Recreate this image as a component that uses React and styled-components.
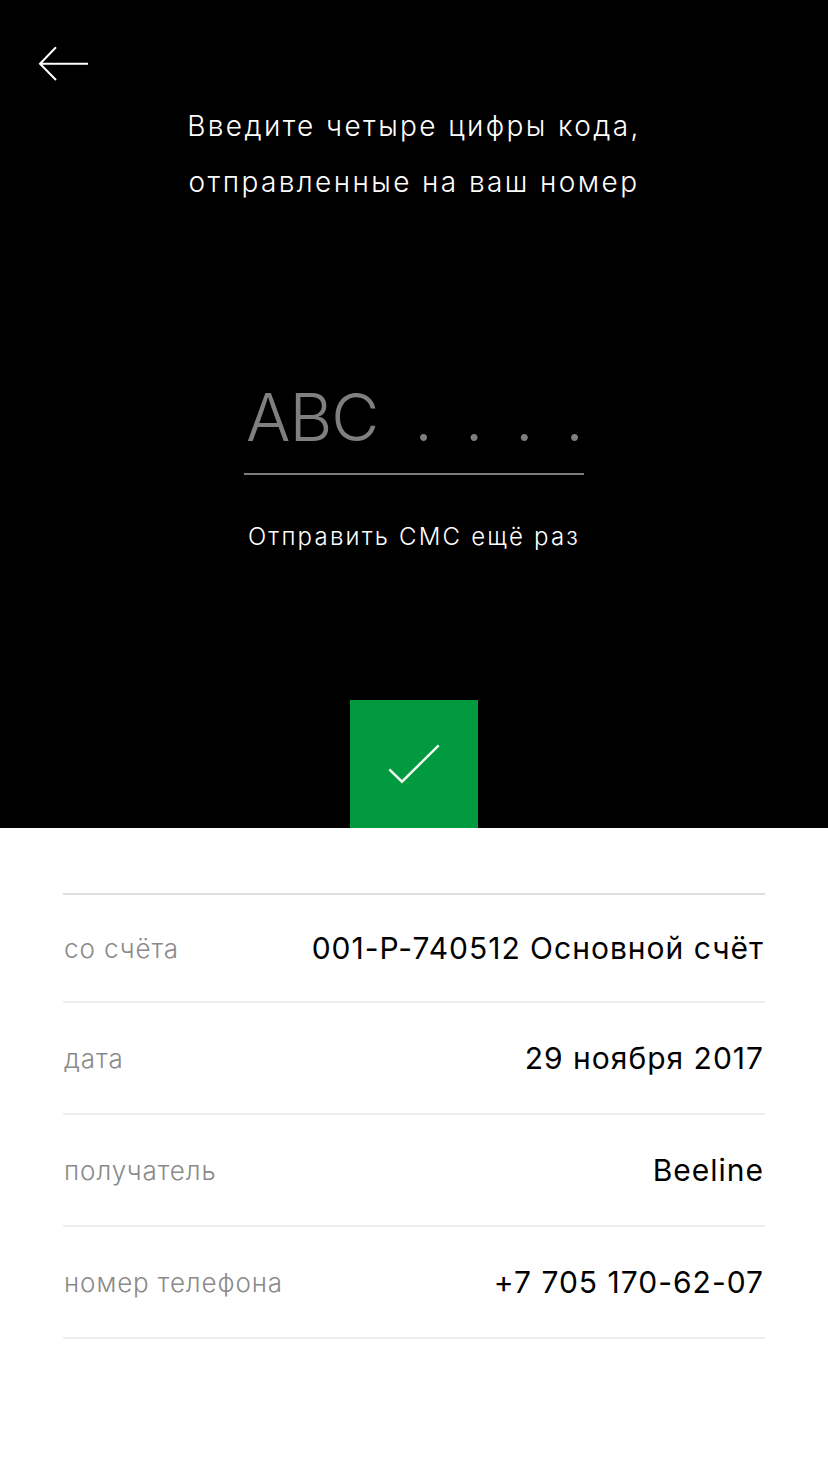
import React from "react";
import styled, { createGlobalStyle } from "styled-components";

const GlobalStyle = createGlobalStyle`
  body {
    margin: 0;
    background: #ffffff;
    font-family: Inter, "Noto Sans", sans-serif;
  }
`;

const Screen = styled.div`
  width: 828px;
  min-height: 1472px;
  display: flex;
  flex-direction: column;
  background: #ffffff;
`;

const Top = styled.div`
  height: 828px;
  background: #000000;
  display: flex;
  flex-direction: column;
  align-items: center;
  padding-top: 45px;
  box-sizing: border-box;
`;

const BackButton = styled.button`
  align-self: flex-start;
  margin-left: 38px;
  width: 52px;
  height: 38px;
  padding: 0;
  border: none;
  background: transparent;
  cursor: pointer;
  display: block;
`;

const Title = styled.div`
  margin-top: 15px;
  color: #ffffff;
  font-size: 28px;
  line-height: 56px;
  font-weight: 300;
  letter-spacing: 2.4px;
  text-align: center;
`;

const CodeField = styled.div`
  margin-top: 174px;
  width: 340px;
  display: flex;
  align-items: baseline;
  padding-bottom: 23px;
  border-bottom: 2px solid #7c7c7c;
  color: #7f7f7f;
  font-size: 66px;
  line-height: 66px;
  font-weight: 300;
`;

const Letters = styled.span`
  padding-left: 2px;
  letter-spacing: -1px;
`;

const Dots = styled.span`
  flex: 1;
  display: flex;
  justify-content: space-between;
  padding-left: 36px;
  padding-right: 0;
`;

const Resend = styled.div`
  margin-top: 46px;
  color: #ffffff;
  font-size: 24px;
  line-height: 32px;
  font-weight: 300;
  letter-spacing: 2.2px;
  cursor: pointer;
`;

const ConfirmButton = styled.button`
  margin-top: auto;
  width: 128px;
  height: 128px;
  padding: 0;
  border: none;
  background: #029a3e;
  display: block;
  cursor: pointer;
`;

const List = styled.div`
  margin: 65px 63px 0;
  border-top: 2px solid #dedede;
`;

const Row = styled.div`
  height: 110px;
  display: flex;
  align-items: center;
  justify-content: space-between;
  border-bottom: 2px solid #ededed;
  &:first-child {
    height: 106px;
  }
`;

const Label = styled.span`
  color: #8a8a8a;
  font-size: 26px;
  font-weight: 300;
  letter-spacing: 0.9px;
  padding-left: 1px;
`;

const Value = styled.span`
  color: #000000;
  font-size: 30px;
  letter-spacing: 1px;
  margin-right: 1px;
`;

const rows = [
  ["со счёта", "001-P-740512 Основной счёт"],
  ["дата", "29 ноября 2017"],
  ["получатель", "Beeline"],
  ["номер телефона", "+7 705 170-62-07"],
];

export default function App() {
  return (
    <>
      <GlobalStyle />
      <Screen>
        <Top>
          <BackButton aria-label="Назад">
            <svg width="52" height="38" viewBox="0 0 52 38" fill="none">
              <path
                d="M18 2.3 L2 18.7 L18 35 M2 18.7 H50"
                stroke="#ffffff"
                strokeWidth="2"
              />
            </svg>
          </BackButton>
          <Title>
            Введите четыре цифры кода,
            <br />
            отправленные на ваш номер
          </Title>
          <CodeField>
            <Letters>ABC</Letters>
            <Dots>
              <span>.</span>
              <span>.</span>
              <span>.</span>
              <span>.</span>
            </Dots>
          </CodeField>
          <Resend>Отправить СМС ещё раз</Resend>
          <ConfirmButton aria-label="Подтвердить">
            <svg width="128" height="128" viewBox="0 0 128 128" fill="none">
              <polyline
                points="39.3,69.3 52,81.7 88.7,45.3"
                stroke="#f0f8f0"
                strokeWidth="2.5"
              />
            </svg>
          </ConfirmButton>
        </Top>
        <List>
          {rows.map(([label, value]) => (
            <Row key={label}>
              <Label>{label}</Label>
              <Value>{value}</Value>
            </Row>
          ))}
        </List>
      </Screen>
    </>
  );
}
